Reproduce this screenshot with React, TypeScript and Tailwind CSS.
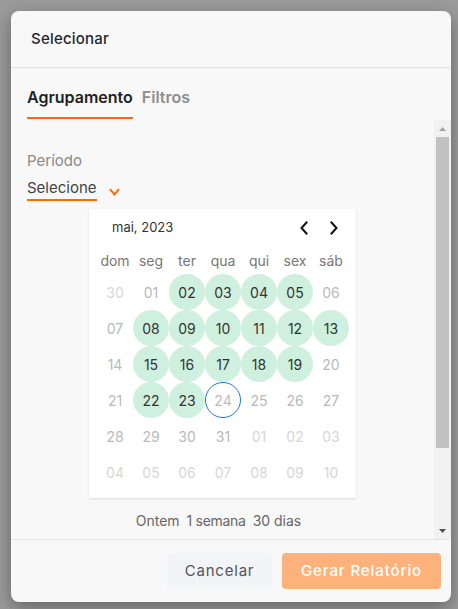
import React from "react";

type Day = { label: string; kind: "out" | "idle" | "picked" | "today" };

const weekdays = ["dom", "seg", "ter", "qua", "qui", "sex", "sáb"];

const rows: Day[][] = [
  [
    { label: "30", kind: "out" },
    { label: "01", kind: "idle" },
    { label: "02", kind: "picked" },
    { label: "03", kind: "picked" },
    { label: "04", kind: "picked" },
    { label: "05", kind: "picked" },
    { label: "06", kind: "idle" },
  ],
  [
    { label: "07", kind: "idle" },
    { label: "08", kind: "picked" },
    { label: "09", kind: "picked" },
    { label: "10", kind: "picked" },
    { label: "11", kind: "picked" },
    { label: "12", kind: "picked" },
    { label: "13", kind: "picked" },
  ],
  [
    { label: "14", kind: "idle" },
    { label: "15", kind: "picked" },
    { label: "16", kind: "picked" },
    { label: "17", kind: "picked" },
    { label: "18", kind: "picked" },
    { label: "19", kind: "picked" },
    { label: "20", kind: "idle" },
  ],
  [
    { label: "21", kind: "idle" },
    { label: "22", kind: "picked" },
    { label: "23", kind: "picked" },
    { label: "24", kind: "today" },
    { label: "25", kind: "idle" },
    { label: "26", kind: "idle" },
    { label: "27", kind: "idle" },
  ],
  [
    { label: "28", kind: "idle" },
    { label: "29", kind: "idle" },
    { label: "30", kind: "idle" },
    { label: "31", kind: "idle" },
    { label: "01", kind: "out" },
    { label: "02", kind: "out" },
    { label: "03", kind: "out" },
  ],
  [
    { label: "04", kind: "out" },
    { label: "05", kind: "out" },
    { label: "06", kind: "out" },
    { label: "07", kind: "out" },
    { label: "08", kind: "out" },
    { label: "09", kind: "out" },
    { label: "10", kind: "out" },
  ],
];

const dayClass: Record<Day["kind"], string> = {
  out: "text-[#d6d6d6]",
  idle: "text-[#b9b9b9]",
  picked: "bg-[#cfefdf] text-[#333]",
  today: "border border-[#1e76d2] text-[#bcbcbc]",
};

function Chevron({ dir }: { dir: "left" | "right" }) {
  return (
    <svg width="10" height="14" viewBox="0 0 10 14" fill="none">
      <path
        d={dir === "left" ? "M7.5 1.5 2.5 7l5 5.5" : "M2.5 1.5 7.5 7l-5 5.5"}
        stroke="#111"
        strokeWidth="2"
        strokeLinecap="square"
      />
    </svg>
  );
}

function Calendar() {
  return (
    <div className="mx-auto w-[267px] bg-white pb-[8px] shadow-[0_1px_2px_rgba(0,0,0,0.12)]">
      <div className="flex h-[37px] items-center pl-[23px] pr-[17px] pt-[1px]">
        <span className="text-[13px] text-[#333]">mai, 2023</span>
        <div className="ml-auto flex items-center gap-[20px]">
          <Chevron dir="left" />
          <Chevron dir="right" />
        </div>
      </div>
      <div className="grid h-[28px] grid-cols-[repeat(7,36px)] items-center px-[8px] text-[14px] text-[#777]">
        {weekdays.map((w) => (
          <span key={w} className="text-center">
            {w}
          </span>
        ))}
      </div>
      <div className="grid grid-cols-[repeat(7,36px)] grid-rows-[repeat(6,36px)] px-[8px] text-[14px]">
        {rows.flat().map((d, i) => (
          <span key={i} className={`flex items-center justify-center rounded-full ${dayClass[d.kind]}`}>
            {d.label}
          </span>
        ))}
      </div>
    </div>
  );
}

function Scrollbar() {
  return (
    <div className="flex w-[17px] shrink-0 flex-col items-center bg-[#f1f1f1]">
      <div className="flex h-[17px] items-center justify-center">
        <svg width="7" height="4" viewBox="0 0 7 4">
          <path d="M0 4 3.5 0 7 4Z" fill="#a3a3a3" />
        </svg>
      </div>
      <div className="h-[311px] w-[13px] bg-[#c1c1c1]" />
      <div className="mt-auto flex h-[17px] items-center justify-center">
        <svg width="7" height="4" viewBox="0 0 7 4">
          <path d="M0 0h7L3.5 4Z" fill="#505050" />
        </svg>
      </div>
    </div>
  );
}

export default function App() {
  return (
    <div
      className="flex h-[609px] w-[458px] bg-[#9b9b9b] pl-[11px] pt-[11px]"
      style={{ fontFamily: "Inter, 'Noto Sans', sans-serif" }}
    >
      <div className="flex h-[591px] w-[440px] flex-col overflow-hidden rounded-[8px] bg-[#f8f8f8] shadow-[0_6px_18px_rgba(0,0,0,0.35)]">
        <div className="flex h-[57px] shrink-0 items-center border-b border-[#e2e2e2] px-[20px]">
          <span className="text-[15px] font-medium tracking-[0.2px] text-[#1f2633]">Selecionar</span>
        </div>

        <div className="flex shrink-0 items-end gap-[9px] px-[16px]">
          <div className="border-b-2 border-[#ff6a00] pb-[9px] pt-[18px] text-[16px] font-semibold leading-[22px] text-[#222]">
            Agrupamento
          </div>
          <div className="pb-[11px] text-[16px] font-semibold leading-[22px] text-[#8d8d8d]">Filtros</div>
        </div>

        <div className="mt-[1px] flex h-[419px] shrink-0">
          <div className="flex-1 overflow-hidden">
            <div className="px-[16px] pt-[31px]">
              <div className="text-[15px] leading-[20px] text-[#8a8a8a]">Período</div>
              <div className="mt-[7px] flex items-center gap-[12px]">
                <span className="border-b-2 border-[#ff6a00] pb-[1px] text-[15px] leading-[20px] text-[#444]">
                  Selecione
                </span>
                <svg width="11" height="8" viewBox="0 0 11 8" fill="none" className="mt-[4px]">
                  <path d="M1 1.2 5.5 6.5 10 1.2" stroke="#ff6a00" strokeWidth="2" />
                </svg>
              </div>
            </div>
            <div className="mt-[8px]">
              <Calendar />
            </div>
            <div className="mt-[13px] flex justify-center gap-[7px] pr-[8px] text-[14px] leading-[20px] text-[#666]">
              <span>Ontem</span>
              <span className="tracking-[-0.3px]">1 semana</span>
              <span>30 dias</span>
            </div>
          </div>
          <Scrollbar />
        </div>

        <div className="flex flex-1 items-start justify-end gap-[10px] border-t border-[#e5e5e5] pr-[10px] pt-[13px]">
          <button className="h-[36px] w-[105px] rounded-[4px] bg-[#f2f4f8] text-[15px] tracking-[0.8px] text-[#555]">
            Cancelar
          </button>
          <button className="h-[36px] w-[159px] rounded-[4px] bg-[#fdb27b] text-[15px] font-medium tracking-[0.9px] text-white">
            Gerar Relatório
          </button>
        </div>
      </div>
    </div>
  );
}
